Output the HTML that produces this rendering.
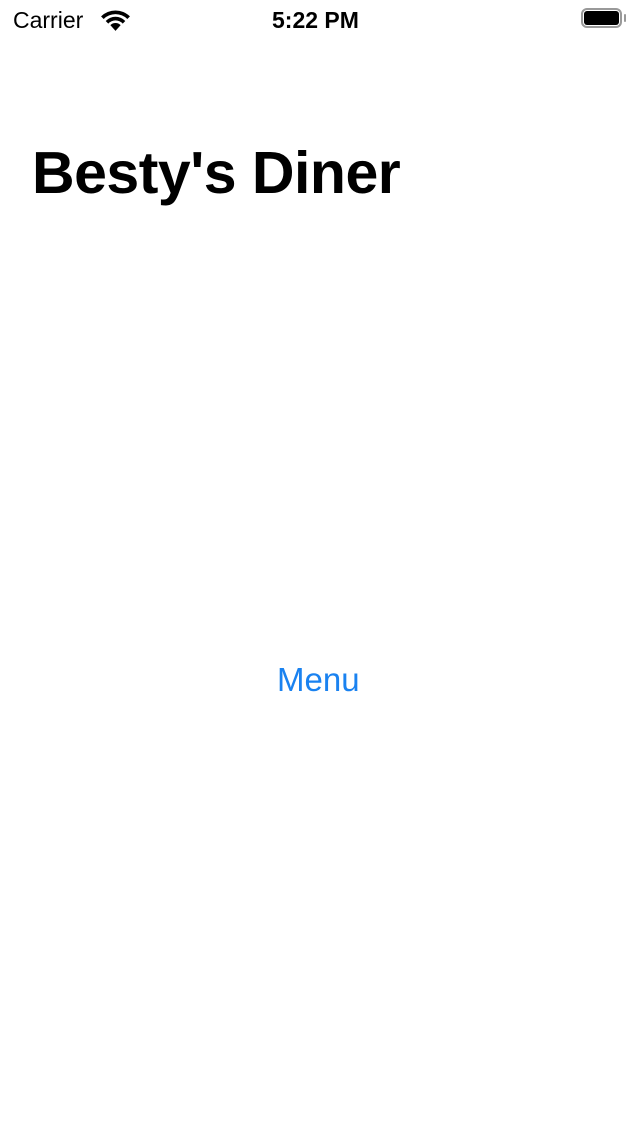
<!DOCTYPE html>
<html><head><style>
body{margin:0;width:640px;height:1136px;background:#fff;position:relative;overflow:hidden;font-family:"Liberation Sans",sans-serif}
.t{position:absolute;white-space:nowrap}
</style></head><body>
<div class="t" style="left:13px;top:7px;font-size:23px;color:#000">Carrier</div>
<svg style="position:absolute;left:99px;top:8px" width="33" height="25" viewBox="0 0 32 24">
<path d="M16 22 L11 16.5 A7 7 0 0 1 21 16.5 Z" fill="#000"/>
<path d="M6.5 12.5 A13 13 0 0 1 25.5 12.5 L23 15 A9.5 9.5 0 0 0 9 15 Z" fill="#000"/>
<path d="M2 8 A20 20 0 0 1 30 8 L27.5 10.5 A16.5 16.5 0 0 0 4.5 10.5 Z" fill="#000"/>
</svg>
<div class="t" style="left:272px;top:7px;font-size:23px;font-weight:bold;color:#000">5:22 PM</div>
<div style="position:absolute;left:581px;top:8px;width:41px;height:20px;border:2px solid #999;border-radius:6px;box-sizing:border-box"></div>
<div style="position:absolute;left:584px;top:11px;width:35px;height:14px;background:#000;border-radius:3px"></div>
<div style="position:absolute;left:624px;top:14px;width:2px;height:8px;background:#999;border-radius:1px"></div>
<div class="t" style="left:32px;top:139px;font-size:59px;font-weight:bold;color:#000;letter-spacing:-0.5px">Besty's Diner</div>
<div class="t" style="left:277px;top:661px;font-size:33px;color:#1a82f0">Menu</div>
</body></html>
